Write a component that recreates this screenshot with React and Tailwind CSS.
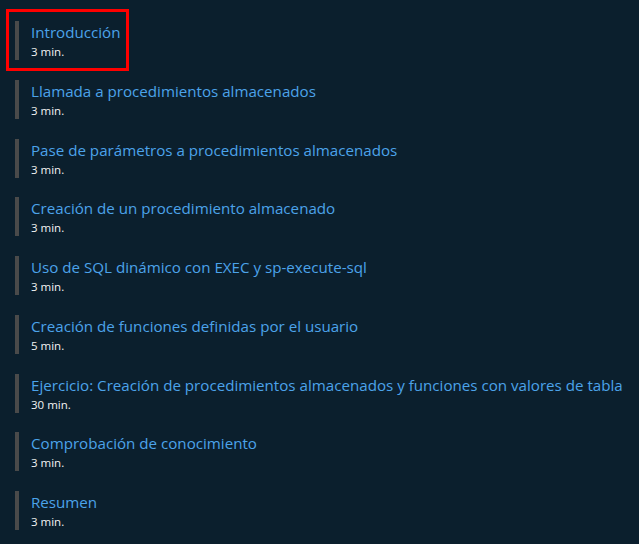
const modules = [
  { title: "Introducción", time: "3 min." },
  { title: "Llamada a procedimientos almacenados", time: "3 min." },
  { title: "Pase de parámetros a procedimientos almacenados", time: "3 min." },
  { title: "Creación de un procedimiento almacenado", time: "3 min." },
  { title: "Uso de SQL dinámico con EXEC y sp-execute-sql", time: "3 min." },
  { title: "Creación de funciones definidas por el usuario", time: "5 min." },
  {
    title:
      "Ejercicio: Creación de procedimientos almacenados y funciones con valores de tabla",
    time: "30 min.",
  },
  { title: "Comprobación de conocimiento", time: "3 min." },
  { title: "Resumen", time: "3 min." },
];

export default function App() {
  return (
    <div
      className="min-h-[544px] w-full bg-[#0b1f2d] pt-[12px] pl-[9px]"
      style={{ fontFamily: '"Open Sans", "Noto Sans", sans-serif' }}
    >
      <ul className="flex flex-col items-start gap-[2.75px]">
        {modules.map((m, i) => (
          <li key={m.title}>
            <a
              href="#"
              className={
                "inline-block pt-[9px] pb-[8px] pl-[6px] pr-[6px] " +
                (i === 0 ? "outline-[3px] outline-solid outline-[#ff0000]" : "")
              }
            >
              <div className="border-l-4 border-[#4a4a4a] pl-[12px] h-[39px]">
                <div className="text-[15.15px] leading-[22px] text-[#4ca3ea] whitespace-nowrap">
                  {m.title}
                </div>
                <div className="pt-[1px] text-[11.5px] leading-[16px] text-[#f2f2f2]">
                  {m.time}
                </div>
              </div>
            </a>
          </li>
        ))}
      </ul>
    </div>
  );
}
